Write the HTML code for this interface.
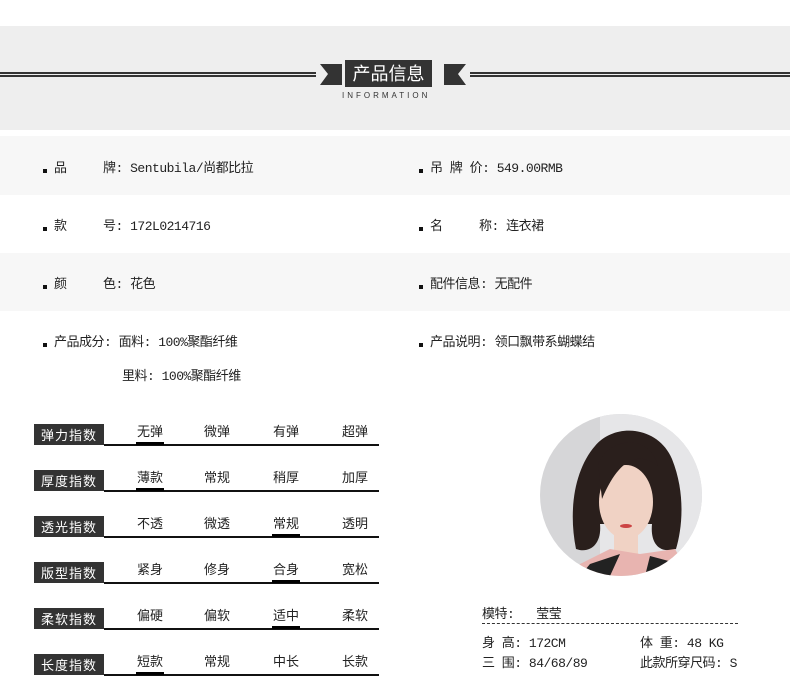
<!DOCTYPE html>
<html><head><meta charset="utf-8"><style>
*{margin:0;padding:0;box-sizing:border-box}
body{width:790px;height:676px;background:#fff;position:relative;overflow:hidden;font-family:"Liberation Mono","Noto Sans CJK SC",monospace;color:#222;font-size:13px}
.a{position:absolute;white-space:nowrap}
.t{letter-spacing:-0.5px}
.band{position:absolute;left:0;width:790px}
.b{position:absolute;width:4px;height:4px;background:#111}
.lbl{position:absolute;left:34px;width:70px;height:21px;background:#333;color:#fff;font-family:"Noto Sans CJK SC",sans-serif;font-size:13px;line-height:21px;text-align:center;letter-spacing:1px}
.ln{position:absolute;left:104px;width:275px;height:2px;background:#111}
.op{position:absolute;width:60px;text-align:center;font-family:"Noto Sans CJK SC",sans-serif;font-size:13px}
.ul{position:absolute;width:28px;height:3px;background:#000}
</style></head><body>
<div class="band" style="top:26px;height:104px;background:#eeeeee"></div>
<div class="a" style="left:0;top:72px;width:316px;height:2px;background:#333"></div>
<div class="a" style="left:0;top:75px;width:316px;height:2px;background:#333"></div>
<div class="a" style="left:470px;top:72px;width:320px;height:2px;background:#333"></div>
<div class="a" style="left:470px;top:75px;width:320px;height:2px;background:#333"></div>
<svg class="a" style="left:320px;top:64px" width="146" height="22"><polygon points="0,0 22,0 22,21 0,21 8,10" fill="#333"/><polygon points="146,0 124,0 124,21 146,21 138,10" fill="#333"/></svg>
<div class="a" style="left:345px;top:60px;width:87px;height:27px;background:#333;color:#fff;font-family:'Noto Sans CJK SC',sans-serif;font-size:18px;line-height:27px;text-align:center">产品信息</div>
<div class="a" style="left:342px;top:91px;font-family:'Liberation Sans',sans-serif;font-size:8px;letter-spacing:3px;color:#333">INFORMATION</div>

<div class="band" style="top:136px;height:59px;background:#f7f7f7"></div>
<div class="band" style="top:253px;height:58px;background:#f7f7f7"></div>

<div class="b" style="left:43px;top:169px"></div><div class="a t" style="left:54px;top:157px">品&nbsp;&nbsp;&nbsp;&nbsp;&nbsp;牌: Sentubila/尚都比拉</div>
<div class="b" style="left:419px;top:169px"></div><div class="a t" style="left:430px;top:157px">吊 牌 价: 549.00RMB</div>
<div class="b" style="left:43px;top:227px"></div><div class="a t" style="left:54px;top:215px">款&nbsp;&nbsp;&nbsp;&nbsp;&nbsp;号: 172L0214716</div>
<div class="b" style="left:419px;top:227px"></div><div class="a t" style="left:430px;top:215px">名&nbsp;&nbsp;&nbsp;&nbsp;&nbsp;称: 连衣裙</div>
<div class="b" style="left:43px;top:285px"></div><div class="a t" style="left:54px;top:273px">颜&nbsp;&nbsp;&nbsp;&nbsp;&nbsp;色: 花色</div>
<div class="b" style="left:419px;top:285px"></div><div class="a t" style="left:430px;top:273px">配件信息: 无配件</div>
<div class="b" style="left:43px;top:343px"></div><div class="a t" style="left:54px;top:331px">产品成分: 面料: 100%聚酯纤维</div>
<div class="a t" style="left:122px;top:365px">里料: 100%聚酯纤维</div>
<div class="b" style="left:419px;top:343px"></div><div class="a t" style="left:430px;top:331px">产品说明: 领口飘带系蝴蝶结</div>

<div id="bars"></div>
<script>
var rows=[["弹力指数","无弹","微弹","有弹","超弹",0],["厚度指数","薄款","常规","稍厚","加厚",0],["透光指数","不透","微透","常规","透明",2],["版型指数","紧身","修身","合身","宽松",2],["柔软指数","偏硬","偏软","适中","柔软",2],["长度指数","短款","常规","中长","长款",0]];
var cx=[150,217,286,355],h="";
rows.forEach(function(r,i){var t=424+46*i;
h+='<div class="lbl" style="top:'+t+'px">'+r[0]+'</div><div class="ln" style="top:'+(t+20)+'px"></div>';
for(var j=0;j<4;j++)h+='<div class="op" style="left:'+(cx[j]-30)+'px;top:'+(t-3)+'px">'+r[j+1]+'</div>';
h+='<div class="ul" style="left:'+(cx[r[5]]-14)+'px;top:'+(t+18)+'px"></div>';});
document.getElementById("bars").innerHTML=h;
</script>

<svg class="a" style="left:540px;top:414px" width="162" height="162">
<defs><clipPath id="c"><circle cx="81" cy="81" r="81"/></clipPath></defs>
<g clip-path="url(#c)">
<rect width="162" height="162" fill="#d6d6d8"/>
<rect x="60" width="102" height="162" fill="#e6e6e8"/>
<path d="M36 135 C28 95 35 55 55 32 C75 8 118 12 132 45 C146 80 142 115 136 135 C120 140 110 130 112 110 L60 110 C62 130 50 140 36 135 Z" fill="#2a1f1c"/>
<ellipse cx="86" cy="88" rx="27" ry="37" fill="#f0d2c4"/>
<rect x="74" y="112" width="24" height="28" fill="#f0d2c4"/>
<path d="M58 50 C70 22 110 20 118 52 C100 38 80 42 62 85 Z" fill="#2a1f1c"/>
<path d="M40 150 L70 135 L100 140 L135 135 L150 162 L30 162 Z" fill="#e8b4b0"/>
<path d="M50 150 L80 140 L70 162 L40 162Z M110 142 L140 150 L135 162 L105 162Z" fill="#222"/>
<ellipse cx="86" cy="112" rx="6" ry="2" fill="#c44"/>
</g></svg>

<div class="a t" style="left:482px;top:603px">模特:&nbsp;&nbsp;&nbsp;莹莹</div>
<div class="a" style="left:482px;top:623px;width:256px;border-top:1px dashed #333"></div>
<div class="a t" style="left:482px;top:632px">身 高: 172CM</div>
<div class="a t" style="left:640px;top:632px">体 重: 48 KG</div>
<div class="a t" style="left:482px;top:652px">三 围: 84/68/89</div>
<div class="a t" style="left:640px;top:652px">此款所穿尺码: S</div>
</body></html>
